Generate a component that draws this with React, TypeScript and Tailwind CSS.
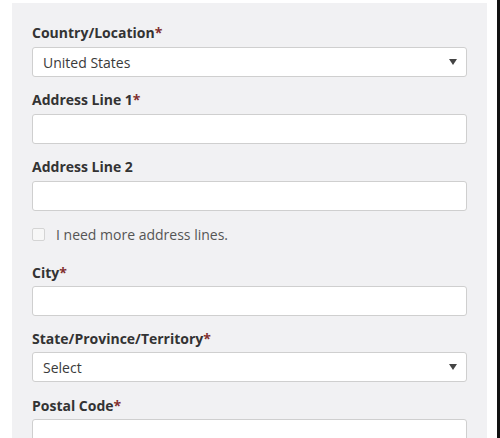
import React from "react";

function Label({ text, req }: { text: string; req?: boolean }) {
  return (
    <div className="h-[20px] leading-[20px] text-[14px] font-bold text-[#333]">
      {text}
      {req && <span className="text-[#823030]">*</span>}
    </div>
  );
}

function Input() {
  return <div className="h-[30px] bg-white border border-[#cfcfcf] rounded-[3px]" />;
}

function Select({ value }: { value: string }) {
  return (
    <div className="h-[30px] bg-white border border-[#cfcfcf] rounded-[3px] flex items-center justify-between pl-[10px] pr-[9px]">
      <span className="text-[14px] text-[#3a3a3a]">{value}</span>
      <svg width="8" height="6" viewBox="0 0 8 6">
        <path d="M0 0 L8 0 L4 6 Z" fill="#444" />
      </svg>
    </div>
  );
}

export default function App() {
  return (
    <div
      className="w-[500px] h-[438px] bg-white flex overflow-hidden"
      style={{ fontFamily: '"Open Sans", sans-serif' }}
    >
      <div className="w-[12px] shrink-0 bg-white" />
      <div className="w-[475px] shrink-0 mt-[3px] bg-[#f1f1f3] px-[20px] pt-[20px]">
        <Label text="Country/Location" req />
        <div className="h-[4px]" />
        <Select value="United States" />
        <div className="h-[13px]" />
        <Label text="Address Line 1" req />
        <div className="h-[4px]" />
        <Input />
        <div className="h-[13px]" />
        <Label text="Address Line 2" />
        <div className="h-[4px]" />
        <Input />
        <div className="h-[16px]" />
        <div className="flex items-center h-[14px]">
          <div className="w-[13px] h-[13px] border border-[#d4d4d4] bg-[#f7f7f7] rounded-[2px]" />
          <span className="ml-[11px] text-[14px] text-[#555]">I need more address lines.</span>
        </div>
        <div className="h-[22px]" />
        <Label text="City" req />
        <div className="h-[3px]" />
        <Input />
        <div className="h-[13px]" />
        <Label text="State/Province/Territory" req />
        <div className="h-[3px]" />
        <Select value="Select" />
        <div className="h-[14px]" />
        <Label text="Postal Code" req />
        <div className="h-[3px]" />
        <Input />
      </div>
      <div className="w-[10px] shrink-0 bg-white" />
      <div className="w-[3px] shrink-0 bg-[#111]" />
    </div>
  );
}
